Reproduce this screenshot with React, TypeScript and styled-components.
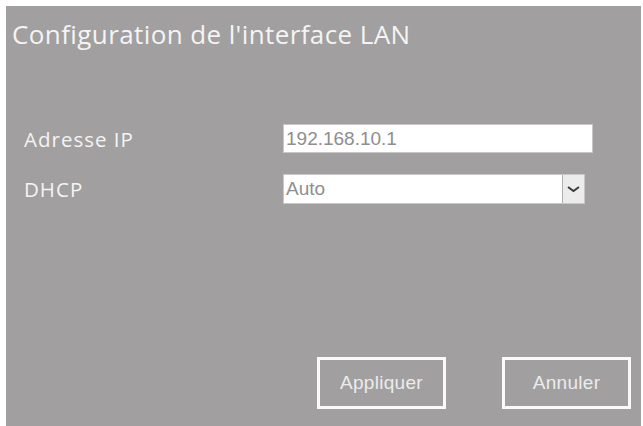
import React from "react";
import styled, { createGlobalStyle } from "styled-components";

const Global = createGlobalStyle`
  html, body { margin: 0; padding: 0; background: #ffffff; }
  body { font-family: "Open Sans", "Noto Sans", sans-serif; }
`;

const Panel = styled.div`
  margin: 6px 2px 0 6px;
  height: 420px;
  background: #a19f9f;
  box-sizing: border-box;
  padding: 10px 0 0 6px;
  display: flex;
  flex-direction: column;
`;

const Title = styled.h1`
  margin: 0;
  font-family: "Open Sans", "Noto Sans", sans-serif;
  font-weight: 400;
  font-size: 26px;
  letter-spacing: 0.4px;
  line-height: 36px;
  color: #f4f4f4;
`;

const Form = styled.div`
  margin-top: 72px;
  padding-left: 12px;
  display: grid;
  grid-template-columns: 259px auto;
  row-gap: 21px;
  align-items: center;
`;

const Label = styled.label`
  font-family: "Open Sans", "Noto Sans", sans-serif;
  font-size: 20.5px;
  letter-spacing: 1px;
  color: #f4f4f4;
`;

const TextField = styled.div`
  width: 310px;
  height: 29px;
  background: #ffffff;
  border: 1px solid #c8c8c8;
  box-sizing: border-box;
  padding-left: 2px;
  display: flex;
  align-items: center;
  font-family: "Liberation Sans", Arial, sans-serif;
  font-size: 19px;
  color: #8e8e8e;
`;

const SelectField = styled.div`
  width: 302px;
  height: 30px;
  display: flex;
  background: #ffffff;
  border: 1px solid #c8c8c8;
  box-sizing: border-box;
  font-family: "Liberation Sans", Arial, sans-serif;
  font-size: 19px;
  color: #8e8e8e;
`;

const SelectValue = styled.div`
  flex: 1;
  display: flex;
  align-items: center;
  padding-left: 2px;
`;

const Arrow = styled.div`
  width: 21px;
  background: #ececec;
  border-left: 1px solid #b0b0b0;
  display: flex;
  align-items: center;
  justify-content: center;
`;

const Buttons = styled.div`
  margin-top: auto;
  margin-bottom: 17px;
  display: flex;
  gap: 56px;
  padding-left: 305px;
`;

const Button = styled.button`
  width: 129px;
  height: 52px;
  background: transparent;
  border: 3px solid #fafafa;
  box-sizing: border-box;
  font-family: "Liberation Sans", Arial, sans-serif;
  font-size: 19px;
  letter-spacing: 0.3px;
  color: #ececec;
  padding: 0;
`;

export default function App() {
  return (
    <>
      <Global />
      <Panel>
        <Title>Configuration de l'interface LAN</Title>
        <Form>
          <Label>Adresse IP</Label>
          <TextField>192.168.10.1</TextField>
          <Label>DHCP</Label>
          <SelectField>
            <SelectValue>Auto</SelectValue>
            <Arrow>
              <svg width="13" height="8" viewBox="0 0 13 8">
                <path d="M1 2 L6.5 6 L12 2" fill="none" stroke="#3a3a3a" strokeWidth="2" />
              </svg>
            </Arrow>
          </SelectField>
        </Form>
        <Buttons>
          <Button>Appliquer</Button>
          <Button>Annuler</Button>
        </Buttons>
      </Panel>
    </>
  );
}
